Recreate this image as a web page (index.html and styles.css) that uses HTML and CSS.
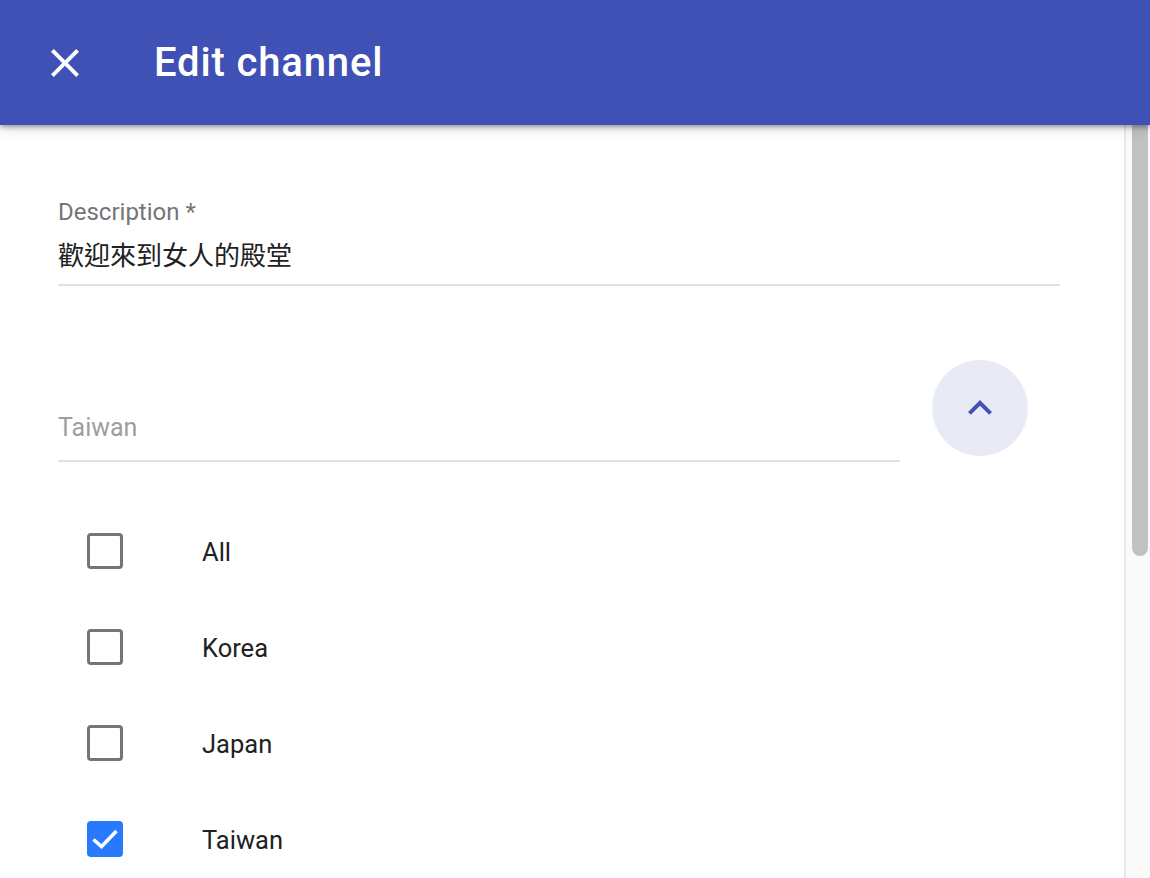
FILE: index.html
```html
<!DOCTYPE html>
<html lang="en">
<head>
<meta charset="utf-8">
<title>Edit channel</title>
<link rel="stylesheet" href="styles.css">
</head>
<body>
<div class="app">
  <header class="toolbar">
    <button class="icon-btn" aria-label="Close">
      <svg viewBox="0 0 24 24" width="48" height="48"><path fill="#fff" d="M19 6.41L17.59 5 12 10.59 6.41 5 5 6.41 10.59 12 5 17.59 6.41 19 12 13.41 17.59 19 19 17.59 13.41 12z"/></svg>
    </button>
    <h1 class="title">Edit channel</h1>
  </header>
  <div class="body-area">
    <main class="content">
      <div class="field">
        <div class="field-label">Description *</div>
        <div class="field-value">歡迎來到女人的殿堂</div>
      </div>
      <div class="filter-row">
        <div class="filter-input">Taiwan</div>
        <div class="filter-action">
          <button class="round-btn" aria-label="Collapse">
            <svg viewBox="0 0 24 24" width="48" height="48"><path fill="#3f51b5" d="M12 8l-6 6 1.41 1.41L12 10.83l4.59 4.58L18 14z"/></svg>
          </button>
        </div>
      </div>
      <ul class="options">
        <li class="option"><span class="box"></span><span class="option-text">All</span></li>
        <li class="option"><span class="box"></span><span class="option-text">Korea</span></li>
        <li class="option"><span class="box"></span><span class="option-text">Japan</span></li>
        <li class="option"><span class="box checked"><svg viewBox="0 0 36 36" width="36" height="36"><polyline points="6.5,18.5 14.5,25.5 29.5,10" fill="none" stroke="#fff" stroke-width="3.6"/></svg></span><span class="option-text">Taiwan</span></li>
      </ul>
    </main>
    <div class="scrollbar" aria-hidden="true"><div class="thumb"></div></div>
  </div>
</div>
</body>
</html>
```
FILE: styles.css
```css
html, body {
  margin: 0;
  padding: 0;
  height: 100%;
}
body {
  font-family: Roboto, "Noto Sans", sans-serif;
  color: #212121;
  background: #fff;
}
.app {
  display: flex;
  flex-direction: column;
  height: 100vh;
  overflow: hidden;
}
.toolbar {
  position: relative;
  z-index: 2;
  flex: none;
  height: 125px;
  background: #3f51b5;
  display: flex;
  align-items: center;
  padding-left: 41px;
  box-shadow: 0 2px 5px rgba(0,0,0,0.35), 0 4px 12px rgba(0,0,0,0.12);
}
.icon-btn {
  border: 0;
  padding: 0;
  margin: 0;
  background: none;
  width: 48px;
  height: 48px;
  display: flex;
}
.title {
  margin: 0 0 0 65px;
  font-size: 40px;
  line-height: 48px;
  font-weight: 500;
  color: #fff;
  letter-spacing: 0.85px;
}
.body-area {
  flex: 1;
  display: flex;
  min-height: 0;
}
.content {
  flex: 1;
  overflow: hidden;
  padding: 73px 64px 0 58px;
}
.scrollbar {
  flex: none;
  width: 16px;
  padding: 0 2px 0 6px;
  background: #fafafa;
  border-left: 2px solid #e8e8e8;
}
.thumb {
  height: 431px;
  background: #c1c1c1;
  border-radius: 0 0 8px 8px;
}
.field-label {
  font-size: 24px;
  line-height: 28px;
  color: #757575;
}
.field-value {
  font-family: "Noto Sans CJK TC", sans-serif;
  font-size: 26px;
  line-height: 36px;
  margin-top: 10px;
  padding-bottom: 12px;
  border-bottom: 2px solid #e0e0e0;
  color: #212121;
}
.filter-row {
  display: flex;
  align-items: flex-start;
  gap: 32px;
  margin-top: 74px;
}
.filter-input {
  flex: 1;
  margin-top: 53px;
  font-size: 25px;
  line-height: 30px;
  padding-bottom: 17px;
  border-bottom: 2px solid #e0e0e0;
  color: #9e9e9e;
}
.filter-action {
  padding-right: 32px;
}
.round-btn {
  width: 96px;
  height: 96px;
  border-radius: 50%;
  border: 0;
  padding: 0;
  margin: 0;
  background: #e8eaf6;
  display: flex;
  align-items: center;
  justify-content: center;
}
.options {
  list-style: none;
  margin: 41px 0 0;
  padding: 0;
}
.option {
  height: 96px;
  display: flex;
  align-items: center;
  padding-left: 29px;
}
.box {
  box-sizing: border-box;
  width: 36px;
  height: 36px;
  border: 3px solid #757575;
  border-radius: 4px;
  flex: none;
  display: flex;
}
.box.checked {
  border: 0;
  background: #2979ff;
}
.option-text {
  margin-left: 79px;
  font-size: 25.5px;
  line-height: 30px;
  padding-top: 2px;
  color: #212121;
}
```
